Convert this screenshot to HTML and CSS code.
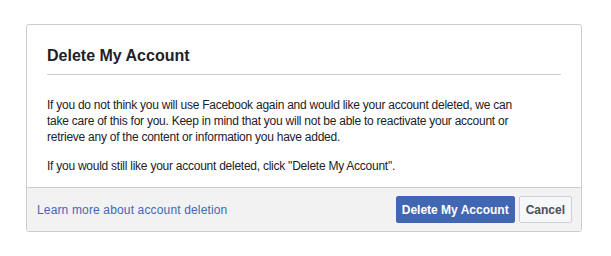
FILE: index.html
```html
<!DOCTYPE html>
<html lang="en">
<head>
  <meta charset="UTF-8">
  <title>Delete My Account</title>
  <link rel="stylesheet" href="styles.css">
</head>
<body>
  <div class="dialog">
    <div class="dialog-body">
      <h2 class="dialog-title">Delete My Account</h2>
      <p>If you do not think you will use Facebook again and would like your account deleted, we can take care of this for you. Keep in mind that you will not be able to reactivate your account or retrieve any of the content or information you have added.</p>
      <p>If you would still like your account deleted, click "Delete My Account".</p>
    </div>
    <div class="dialog-footer">
      <a class="learn-link" href="#">Learn more about account deletion</a>
      <div class="actions">
        <button class="btn btn-primary">Delete My Account</button>
        <button class="btn">Cancel</button>
      </div>
    </div>
  </div>
</body>
</html>
```
FILE: styles.css
```css
* {
  margin: 0;
  padding: 0;
  box-sizing: border-box;
}

body {
  background: #fff;
  font-family: "Liberation Sans", Arial, sans-serif;
  font-size: 12px;
  color: #1d2129;
  padding: 24px 29px 0 26px;
}

.dialog {
  border: 1px solid #ccc;
  border-radius: 3px;
  overflow: hidden;
  width: 556px;
}

.dialog-body {
  padding: 21px 20px 1px 20px;
}

.dialog-title {
  font-size: 16px;
  font-weight: bold;
  color: #1d2129;
  line-height: 20px;
  padding-bottom: 8px;
  border-bottom: 1px solid #ccc;
  margin-bottom: 22px;
}

.dialog-body p {
  line-height: 16px;
  margin-bottom: 13px;
  letter-spacing: -0.25px;
  padding-right: 40px;
}

.dialog-body p:last-child {
  margin-bottom: 12px;
}

.dialog-footer {
  background: #f2f2f2;
  border-top: 1px solid #ccc;
  display: flex;
  align-items: center;
  justify-content: space-between;
  padding: 8px 9px 8px 10px;
}

.learn-link {
  color: #4267b2;
  text-decoration: none;
  letter-spacing: 0.15px;
}

.actions {
  display: flex;
  gap: 4px;
}

.btn {
  font-family: inherit;
  font-size: 12px;
  font-weight: bold;
  height: 27px;
  padding: 0 6px;
  border: 1px solid #ced0d4;
  border-radius: 2px;
  background: #f6f7f9;
  color: #4b4f56;
  cursor: pointer;
}

.btn-primary {
  padding: 0 5px;
  background: #4267b2;
  border-color: #4267b2;
  color: #fff;
}
```
